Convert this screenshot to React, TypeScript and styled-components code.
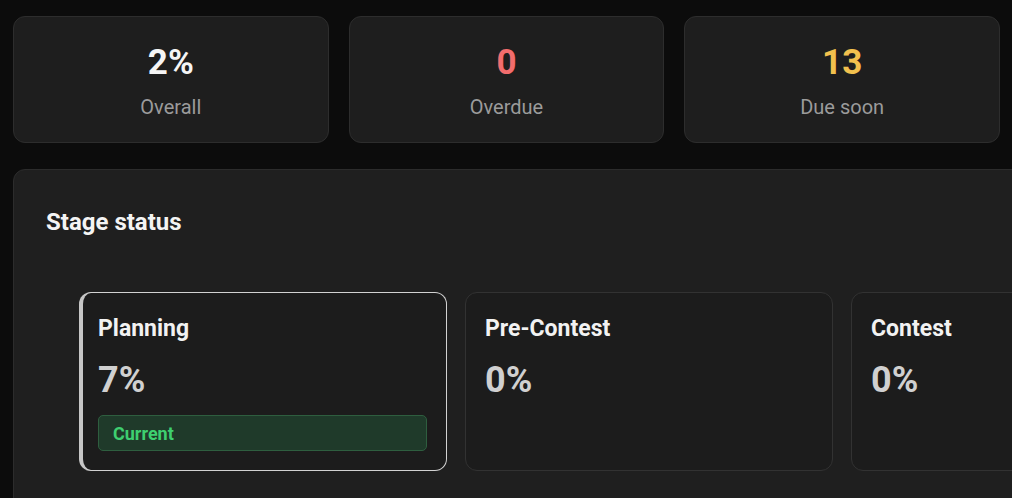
import { createGlobalStyle } from 'styled-components'
import styled from 'styled-components'

type Stat = { value: string; label: string; tone: 'plain' | 'danger' | 'warning' }
type Stage = { name: string; percent: number; current?: boolean }

const stats: Stat[] = [
  { value: '2%', label: 'Overall', tone: 'plain' },
  { value: '0', label: 'Overdue', tone: 'danger' },
  { value: '13', label: 'Due soon', tone: 'warning' },
]

const stages: Stage[] = [
  { name: 'Planning', percent: 7, current: true },
  { name: 'Pre-Contest', percent: 0 },
  { name: 'Contest', percent: 0 },
]

const toneColor = {
  plain: '#f5f5f5',
  danger: '#f26d6d',
  warning: '#f2c14e',
}

export default function App() {
  return (
    <>
      <GlobalStyle />
      <Page>
        <StatGrid>
          {stats.map((s) => (
            <StatCard key={s.label}>
              <StatValue $tone={s.tone}>{s.value}</StatValue>
              <StatLabel>{s.label}</StatLabel>
            </StatCard>
          ))}
        </StatGrid>

        <Panel>
          <PanelTitle>Stage status</PanelTitle>
          <StageRow>
            {stages.map((st) => (
              <StageCard key={st.name} $current={st.current}>
                <StageName>{st.name}</StageName>
                <StagePercent>{st.percent}%</StagePercent>
                {st.current && <CurrentBadge>Current</CurrentBadge>}
              </StageCard>
            ))}
          </StageRow>
        </Panel>
      </Page>
    </>
  )
}

const GlobalStyle = createGlobalStyle`
  html, body {
    margin: 0;
    background: #0c0c0c;
    overflow: hidden;
  }
  body {
    font-family: Roboto, "Liberation Sans", Arial, sans-serif;
    color: #f2f2f2;
  }
  * { box-sizing: border-box; }
`

const Page = styled.main`
  padding: 16px 12px 0 13px;
  display: flex;
  flex-direction: column;
  gap: 26px;
`

const StatGrid = styled.section`
  display: grid;
  grid-template-columns: repeat(3, 1fr);
  gap: 20px;
`

const StatCard = styled.div`
  display: flex;
  flex-direction: column;
  align-items: center;
  height: 127px;
  padding-top: 25px;
  background: #1e1e1e;
  border: 1px solid #2d2d2d;
  border-radius: 12px;
`

const StatValue = styled.div<{ $tone: Stat['tone'] }>`
  font-size: 35px;
  line-height: 42px;
  font-weight: 700;
  color: ${({ $tone }) => toneColor[$tone]};
`

const StatLabel = styled.div`
  margin-top: 9px;
  font-size: 20px;
  line-height: 28px;
  color: #9b9b9b;
`

const Panel = styled.section`
  width: max-content;
  padding: 38px 32px 32px;
  background: #1f1f1f;
  border: 1px solid #2c2c2c;
  border-radius: 12px;
`

const PanelTitle = styled.h2`
  margin: 0 0 22px;
  font-size: 24px;
  line-height: 29px;
  font-weight: 700;
  color: #f4f4f4;
`

const StageRow = styled.div`
  display: flex;
  gap: 18px;
  padding: 33px;
`

const StageCard = styled.div<{ $current?: boolean }>`
  width: 368px;
  height: 179px;
  display: flex;
  flex-direction: column;
  padding: 22px 19px 18px ${({ $current }) => ($current ? '15px' : '19px')};
  background: #1c1c1c;
  border: 1px solid ${({ $current }) => ($current ? '#d2d2d2' : '#323232')};
  border-left: ${({ $current }) => ($current ? '4px solid #c6c6c6' : '1px solid #323232')};
  border-radius: 12px;
`

const StageName = styled.div`
  font-size: 23px;
  line-height: 28px;
  font-weight: 700;
  color: #f2f2f2;
`

const StagePercent = styled.div`
  margin-top: 16px;
  font-size: 36px;
  line-height: 43px;
  font-weight: 700;
  color: #d0d0d0;
`

const CurrentBadge = styled.div`
  margin-top: 13px;
  height: 36px;
  display: flex;
  align-items: center;
  padding-left: 14px;
  background: #1f3a2a;
  border: 1px solid #2e5e3f;
  border-radius: 5px;
  font-size: 18px;
  font-weight: 700;
  color: #3ecf70;
`
